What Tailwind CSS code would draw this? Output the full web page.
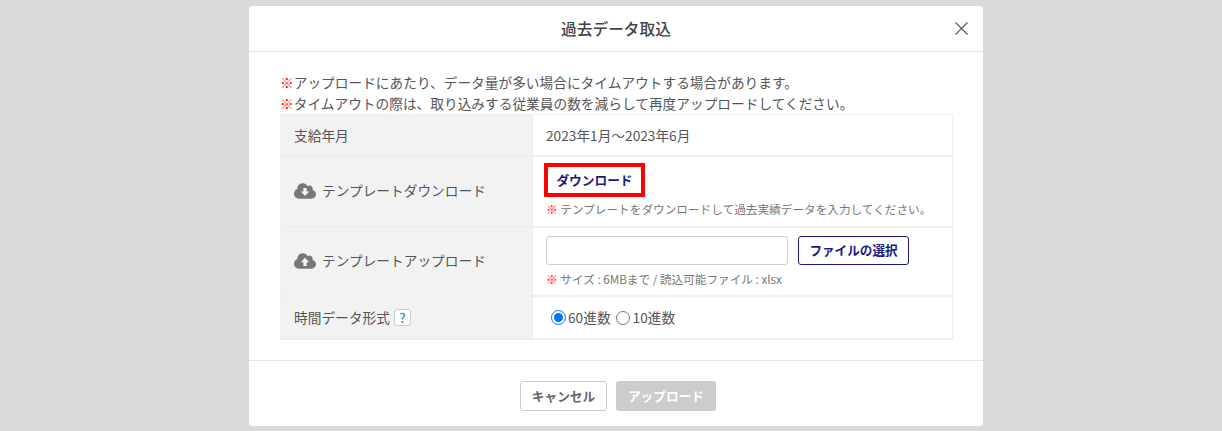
<!DOCTYPE html>
<html lang="ja">
<head>
    <meta charset="UTF-8">
    <title>過去データ取込</title>
    <script src="https://cdn.jsdelivr.net/npm/@tailwindcss/browser@4"></script>
</head>
<body class="bg-[#d9d9d9] h-[431px] overflow-hidden font-['Noto_Sans_CJK_JP',sans-serif] text-[#555] text-[13.7px]">
    <div class="w-[734px] h-[420px] mt-[6px] ml-[249px] bg-white rounded-[3px] flex flex-col">
        <div class="h-[46px] shrink-0 border-b border-[#e6e6e6] flex items-center justify-center relative">
            <h1 class="text-[15.7px] font-medium text-[#444] leading-none">過去データ取込</h1>
            <svg class="absolute right-[14px] top-[15px] w-[15px] h-[15px]" viewBox="0 0 15 15" fill="none" stroke="#666" stroke-width="1.4"><path d="M1.500 1.500 L13.500 13.500 M13.500 1.500 L1.500 13.500"/></svg>
        </div>

        <div class="h-[309px] shrink-0 border-b border-[#e6e6e6] pt-[20px] px-[31px]">
            <p class="leading-[21px]"><span class="text-[#f00]">※</span>アップロードにあたり、データ量が多い場合にタイムアウトする場合があります。</p>
            <p class="leading-[21px]"><span class="text-[#f00]">※</span>タイムアウトの際は、取り込みする従業員の数を減らして再度アップロードしてください。</p>

            <div class="w-[673px] border border-[#eee] border-b-2">
                <div class="flex h-[42px] border-b-2 border-[#eee]">
                    <div class="w-[252px] bg-[#f2f2f2] border-r border-[#eee] flex items-center pl-[13px]">支給年月</div>
                    <div class="flex-1 flex items-center pl-[13px]">2023年1月〜2023年6月</div>
                </div>
                <div class="flex h-[71px] border-b-2 border-[#eee]">
                    <div class="w-[252px] bg-[#f2f2f2] border-r border-[#eee] flex items-center pl-[13px] pb-[2px] gap-[6px]">
                        <svg class="w-[22px] h-[18px]" viewBox="0 0 640 512"><path fill="#777" d="M144 480C64.500 480 0 415.500 0 336c0-62.800 40.200-116.200 96.200-135.900c-.1-2.700-.2-5.400-.2-8.100c0-88.400 71.600-160 160-160c59.300 0 111 32.200 138.700 80.200C409.900 102 428.300 96 448 96c53 0 96 43 96 96c0 12.200-2.300 23.800-6.400 34.600C596 238.400 640 290.100 640 352c0 70.700-57.300 128-128 128H144z"/><path fill="#f2f2f2" d="M272 170h96v100h72L320 400 200 270h72z"/></svg>
                        <span>テンプレートダウンロード</span>
                    </div>
                    <div class="flex-1 pl-[11px] pt-[6px]">
                        <div class="w-[101px] h-[34px] border-[4px] border-[#f00] flex items-center justify-center text-[12.7px] font-bold text-[#1a1a80]">ダウンロード</div>
                        <p class="text-[11.65px] text-[#777] leading-[16px] mt-[4px] ml-[2px]"><span class="text-[#f00]">※</span> テンプレートをダウンロードして過去実績データを入力してください。</p>
                    </div>
                </div>
                <div class="flex h-[69px] border-b-2 border-[#eee]">
                    <div class="w-[252px] bg-[#f2f2f2] border-r border-[#eee] flex items-center pl-[13px] pb-[2px] gap-[6px]">
                        <svg class="w-[22px] h-[18px]" viewBox="0 0 640 512"><path fill="#777" d="M144 480C64.500 480 0 415.500 0 336c0-62.800 40.200-116.200 96.200-135.900c-.1-2.700-.2-5.400-.2-8.100c0-88.400 71.600-160 160-160c59.300 0 111 32.200 138.700 80.200C409.900 102 428.300 96 448 96c53 0 96 43 96 96c0 12.200-2.300 23.800-6.400 34.600C596 238.400 640 290.100 640 352c0 70.700-57.300 128-128 128H144z"/><path fill="#f2f2f2" d="M272 400h96V290h72L320 160 200 290h72z"/></svg>
                        <span>テンプレートアップロード</span>
                    </div>
                    <div class="flex-1 pl-[13px] pt-[8px]">
                        <div class="flex gap-[10px]">
                            <div class="w-[242px] h-[29px] border border-[#ccc] rounded-[3px]"></div>
                            <div class="w-[111px] h-[29px] border border-[#1a1a80] rounded-[3px] flex items-center justify-center text-[12.6px] font-bold text-[#1a1a80]">ファイルの選択</div>
                        </div>
                        <p class="text-[11.65px] text-[#777] leading-[16px] mt-[6px]"><span class="text-[#f00]">※</span> サイズ : 6MBまで / 読込可能ファイル : xlsx</p>
                    </div>
                </div>
                <div class="flex h-[41px]">
                    <div class="w-[252px] bg-[#f2f2f2] border-r border-[#eee] flex items-center pl-[13px] gap-[4px]">
                        <span>時間データ形式</span>
                        <span class="w-[17px] h-[17px] bg-white border border-[#ccc] rounded-[3px] flex items-center justify-center text-[13px] font-medium text-[#3b8cf0] leading-none">?</span>
                    </div>
                    <div class="flex-1 flex items-center pl-[18px]">
                        <input type="radio" name="time" checked class="w-[15px] h-[15px] m-0 accent-[#0075ff]">
                        <span class="ml-[2px]">60進数</span>
                        <input type="radio" name="time" class="w-[14px] h-[14px] m-0 ml-[5px]">
                        <span class="ml-[3px]">10進数</span>
                    </div>
                </div>
            </div>
        </div>

        <div class="flex justify-center gap-[9px] pt-[20px] pl-[4px] text-[12.7px] font-bold">
            <div class="w-[87px] h-[30px] border border-[#ccc] rounded-[3px] flex items-center justify-center text-[#666]">キャンセル</div>
            <div class="w-[100px] h-[30px] bg-[#ccc] rounded-[3px] flex items-center justify-center text-white">アップロード</div>
        </div>
    </div>
</body>
</html>
